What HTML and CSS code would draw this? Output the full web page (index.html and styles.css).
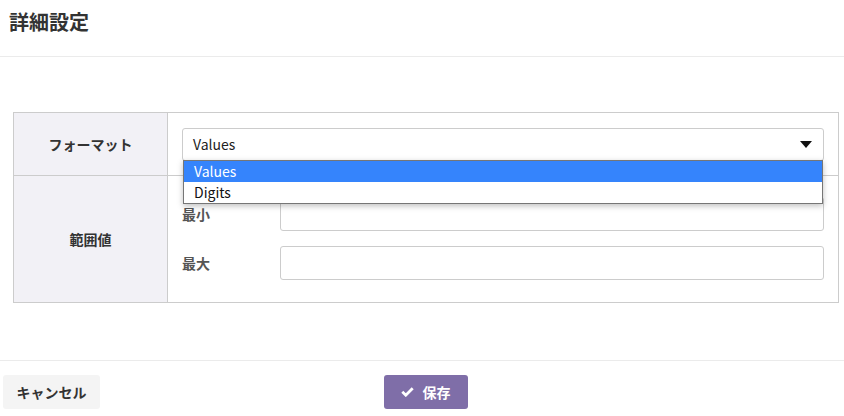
FILE: index.html
```html
<!DOCTYPE html>
<html lang="ja">
<head>
<meta charset="UTF-8" />
<title>詳細設定</title>
<link rel="stylesheet" href="styles.css">
</head>
<body>

<div class="modal">
  <div class="modal-header">
    <h2>詳細設定</h2>
  </div>

  <div class="modal-body">
    <table class="settings">
      <tr class="row-format">
        <th>フォーマット</th>
        <td>
          <div class="select-wrap">
            <div class="select">
              <span>Values</span>
              <svg class="caret" width="12" height="7" viewBox="0 0 12 7"><path d="M0 0H12L6 7Z" fill="#111"/></svg>
            </div>
            <ul class="options">
              <li class="active">Values</li>
              <li>Digits</li>
            </ul>
          </div>
        </td>
      </tr>
      <tr class="row-range">
        <th>範囲値</th>
        <td>
          <div class="range-line">
            <label>最小</label>
            <input type="text" />
          </div>
          <div class="range-line">
            <label>最大</label>
            <input type="text" />
          </div>
        </td>
      </tr>
    </table>
  </div>

  <div class="modal-footer">
    <button class="btn-cancel">キャンセル</button>
    <button class="btn-save">
      <svg width="13" height="10" viewBox="0 0 13 10"><path d="M1.3 4.8L4.8 8.2 11.7 1.3" fill="none" stroke="#fff" stroke-width="2.8"/></svg>
      保存
    </button>
  </div>
</div>

</body>
</html>
```

FILE: styles.css
```css
body {
  margin: 0;
  font-family: 'Noto Sans CJK JP', 'Noto Sans', sans-serif;
  color: #333;
  background: #fff;
}
.modal-header {
  height: 57px;
  padding-left: 9px;
  border-bottom: 1px solid #ebebeb;
  box-sizing: border-box;
}
.modal-header h2 {
  margin: 0;
  padding-top: 7px;
  font-size: 20px;
  line-height: 30px;
  font-weight: 700;
  color: #333;
}
.modal-body {
  padding: 55px 5px 57px 13px;
}
.settings {
  width: 100%;
  border-collapse: collapse;
  border: 1px solid #cccccc;
}
.settings th {
  width: 153px;
  background: #f2f1f6;
  border: 1px solid #cccccc;
  font-size: 14px;
  font-weight: 700;
  color: #333;
  padding: 0;
}
.settings td {
  border: 1px solid #cccccc;
  padding: 0 14px;
}
.row-format td {
  height: 62px;
}
.select-wrap {
  position: relative;
}
.select {
  height: 33px;
  border: 1px solid #ccc;
  border-radius: 3px;
  box-sizing: border-box;
  display: flex;
  align-items: center;
  justify-content: space-between;
  padding: 0 11px 0 10px;
  font-size: 14px;
  color: #222;
}
.options {
  position: absolute;
  left: 1px;
  right: 1px;
  top: 32px;
  margin: 0;
  padding: 0;
  list-style: none;
  background: #fff;
  border: 1px solid #767676;
  box-shadow: 0 2px 6px rgba(0,0,0,0.25);
  z-index: 2;
}
.options li {
  height: 21px;
  line-height: 21px;
  padding-left: 10px;
  font-size: 14px;
  color: #111;
}
.options li.active {
  background: #3584fc;
  color: #fff;
}
.row-range td {
  padding: 21px 14px 22px;
}
.range-line {
  display: flex;
  align-items: center;
}
.range-line + .range-line {
  margin-top: 15px;
}
.range-line label {
  width: 98px;
  font-size: 14px;
  font-weight: 700;
  color: #555;
}
.range-line input {
  flex: 1;
  height: 34px;
  border: 1px solid #ccc;
  border-radius: 3px;
  box-sizing: border-box;
  margin: 0;
}
.modal-footer {
  border-top: 1px solid #ebebeb;
  padding: 14px 0 0 3px;
  display: grid;
  grid-template-columns: 381px auto;
  justify-items: start;
}
.modal-footer button {
  height: 34px;
  border: none;
  border-radius: 3px;
  font-family: inherit;
  font-size: 14px;
  font-weight: 700;
  cursor: pointer;
}
.btn-cancel {
  width: 97px;
  background: #f4f4f4;
  color: #333;
}
.btn-save {
  width: 84px;
  background: #7f6ea8;
  color: #fff;
  display: flex;
  align-items: center;
  justify-content: center;
  gap: 9px;
  padding: 0 1px 0 0;
}
```
